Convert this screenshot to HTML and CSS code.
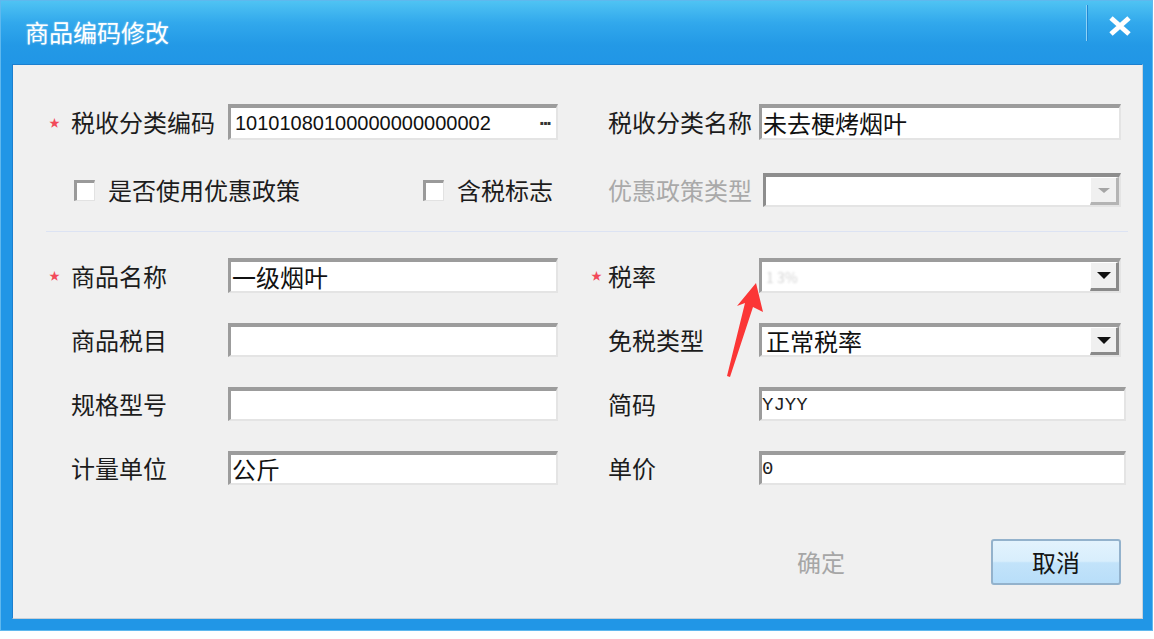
FILE: index.html
```html
<!DOCTYPE html>
<html lang="zh-CN">
<head>
    <meta charset="UTF-8">
    <meta name="viewport" content="width=device-width, initial-scale=1.0">
    <title>商品编码修改</title>
    <link rel="stylesheet" href="styles.css">
</head>
<body>
    <div class="window">
        <div class="titlebar">
            <span class="title">商品编码修改</span>
            <span class="close-sep"></span>
            <span class="close">
                <svg width="24" height="20" viewBox="0 0 24 20">
                    <path d="M3 2 L21 18 M21 2 L3 18" stroke="#fff" stroke-width="5" fill="none"/>
                </svg>
            </span>
        </div>

        <div class="panel">
            <!-- 税收分类 -->
            <div class="row row-first">
                <span class="req">★</span>
                <span class="label">税收分类编码</span>
                <div class="field">
                    <span class="code">10101080100000000000002</span>
                    <span class="dots">···</span>
                </div>
                <span></span>
                <span></span>
                <span class="label">税收分类名称</span>
                <div class="field">未去梗烤烟叶</div>
            </div>

            <div class="row row-checks">
                <span></span>
                <div class="checks">
                    <span class="check-item"><span class="checkbox"></span>是否使用优惠政策</span>
                    <span class="check-item tax-flag"><span class="checkbox"></span>含税标志</span>
                </div>
                <span></span>
                <span></span>
                <span class="label disabled">优惠政策类型</span>
                <div class="field combo combo-disabled">
                    <span class="combo-text"></span>
                    <span class="drop"><span class="tri"></span></span>
                </div>
            </div>

            <div class="separator"></div>

            <!-- 商品信息 -->
            <div class="row row-goods">
                <span class="req">★</span>
                <span class="label">商品名称</span>
                <div class="field">一级烟叶</div>
                <span></span>
                <span class="req">★</span>
                <span class="label">税率</span>
                <div class="field combo">
                    <span class="combo-text blurred">1 3%</span>
                    <span class="drop"><span class="tri"></span></span>
                </div>
            </div>

            <div class="row">
                <span></span>
                <span class="label">商品税目</span>
                <div class="field"></div>
                <span></span>
                <span></span>
                <span class="label">免税类型</span>
                <div class="field combo">
                    <span class="combo-text">正常税率</span>
                    <span class="drop"><span class="tri"></span></span>
                </div>
            </div>

            <div class="row">
                <span></span>
                <span class="label">规格型号</span>
                <div class="field"></div>
                <span></span>
                <span></span>
                <span class="label">简码</span>
                <div class="field wide mono">YJYY</div>
            </div>

            <div class="row">
                <span></span>
                <span class="label">计量单位</span>
                <div class="field">公斤</div>
                <span></span>
                <span></span>
                <span class="label">单价</span>
                <div class="field wide mono">0</div>
            </div>

            <div class="actions">
                <button class="btn btn-ok" disabled>确定</button>
                <button class="btn btn-cancel">取消</button>
            </div>
        </div>

        <!-- 标注箭头 -->
        <svg class="arrow" width="1153" height="631" viewBox="0 0 1153 631">
            <polygon points="756,283 763,312 753,307 730,377 727,376 745,303 737,306" fill="#fb3636"/>
        </svg>
    </div>
</body>
</html>
```

FILE: styles.css
```css
html, body {
    margin: 0;
    padding: 0;
    background: #fff;
}

body {
    width: 1154px;
    height: 639px;
    font-family: "Noto Sans CJK SC", "Liberation Sans", sans-serif;
}

.window {
    position: relative;
    width: 1153px;
    height: 631px;
    box-sizing: border-box;
    background: #2196e6;
    border: 1px solid #5fb8ee;
    display: flex;
    flex-direction: column;
}

.titlebar {
    height: 63px;
    display: flex;
    align-items: center;
    background: linear-gradient(#4fc3f3 0%, #31a8ec 35%, #2399e6 70%, #2196e6 100%);
    padding-left: 24px;
}

.title {
    color: #fff;
    font-size: 24px;
    line-height: 1;
    text-shadow: 0 0 2px rgba(255, 255, 255, 0.5);
    margin-top: -2px;
}

.close-sep {
    margin-left: auto;
    align-self: flex-start;
    margin-top: 4px;
    width: 1px;
    height: 36px;
    background: #8fd2f5;
    border-right: 1px solid #1e88d6;
}

.close {
    width: 64px;
    display: flex;
    justify-content: center;
    margin-top: -14px;
}

.panel {
    flex: 1;
    margin: 0 9px 11px 11px;
    background: #f0f0f0;
    border: 1px solid #1b7fcf;
    border-right-color: #c9d3dc;
    border-bottom-color: #c9cfd6;
    padding: 39px 0 0 33px;
    box-sizing: border-box;
}

.row {
    display: grid;
    grid-template-columns: 25px 157px 330px 30px 20px 151px 362px;
    align-items: center;
    height: 34px;
    margin-top: 30px;
}

.row-first {
    height: 36px;
    margin-top: 0;
}

.row-checks {
    margin-top: 33px;
}

.row-goods {
    margin-top: 26px;
    height: 35px;
}

.req {
    color: #f24a5a;
    font-size: 11px;
    line-height: 1;
    padding-left: 3px;
}

.label {
    font-size: 24px;
    line-height: 1;
    color: #1c1c1c;
    white-space: nowrap;
}

.label.disabled {
    color: #a9a9a9;
}

.field {
    height: 100%;
    box-sizing: border-box;
    background: #fff;
    border-top: 4px solid #9c9c9c;
    border-left: 3px solid #9c9c9c;
    border-right: 2px solid #e4e4e4;
    border-bottom: 2px solid #e4e4e4;
    font-size: 24px;
    line-height: 1;
    color: #111;
    display: flex;
    align-items: center;
    padding-left: 1px;
    white-space: nowrap;
    overflow: hidden;
}

.field.wide {
    margin-right: -5px;
}

.field.mono {
    font-family: "Liberation Mono", monospace;
    font-size: 19px;
    color: #222;
    padding-left: 0;
}

.code {
    font-family: "Liberation Sans", sans-serif;
    font-size: 20px;
    color: #111;
    padding-left: 3px;
}

.dots {
    margin-left: auto;
    margin-right: 6px;
    font-family: "Liberation Sans", sans-serif;
    font-size: 20px;
    font-weight: bold;
    color: #333;
    letter-spacing: -3px;
}

.checks {
    grid-column: 2 / span 2;
    display: flex;
    align-items: center;
    padding-left: 3px;
    padding-right: 5px;
}

.check-item {
    display: flex;
    align-items: center;
    font-size: 24px;
    line-height: 1;
    color: #1c1c1c;
}

.tax-flag {
    margin-left: auto;
}

.checkbox {
    width: 21px;
    height: 21px;
    box-sizing: border-box;
    background: #fff;
    border-top: 3px solid #9a9a9a;
    border-left: 3px solid #9a9a9a;
    border-right: 1px solid #e2e2e2;
    border-bottom: 1px solid #e2e2e2;
    margin-right: 13px;
}

.combo {
    padding-left: 4px;
    padding-right: 0;
}

.combo-disabled {
    margin-left: 4px;
    border-top-color: #8d8d8d;
    border-left-color: #8d8d8d;
}

.combo-text {
    flex: 1;
}

.combo-text.blurred {
    color: #d4d4d4;
    font-size: 14px;
    filter: blur(1px);
}

.drop {
    width: 29px;
    height: 100%;
    box-sizing: border-box;
    background: #f0f0f0;
    border-top: 1px solid #fff;
    border-left: 1px solid #fff;
    border-right: 3px solid #8a8a8a;
    border-bottom: 3px solid #8a8a8a;
    display: flex;
    align-items: center;
    justify-content: center;
}

.tri {
    width: 0;
    height: 0;
    border-left: 7px solid transparent;
    border-right: 7px solid transparent;
    border-top: 7px solid #111;
}

.combo-disabled .drop {
    border-right-color: #b4b4b4;
    border-bottom-color: #b4b4b4;
}

.combo-disabled .tri {
    border-top-color: #a5a5a5;
    border-left-width: 6px;
    border-right-width: 6px;
    border-top-width: 5px;
}

.separator {
    height: 1px;
    background: #dce3f3;
    width: 1082px;
    margin-top: 24px;
}

.actions {
    display: flex;
    justify-content: flex-end;
    gap: 105px;
    margin-top: 54px;
    padding-right: 21px;
}

.btn {
    width: 130px;
    height: 46px;
    box-sizing: border-box;
    font-family: "Noto Sans CJK SC", sans-serif;
    font-size: 24px;
    line-height: 1;
    border-radius: 3px;
    padding: 0;
}

.btn-ok {
    background: transparent;
    border: none;
    color: #a6a6a6;
}

.btn-cancel {
    background: linear-gradient(#e3f3fd 0%, #d8eefc 48%, #c2e3fa 52%, #b8def9 100%);
    border: 2px solid #93b2cc;
    color: #151515;
    cursor: pointer;
}

.arrow {
    position: absolute;
    left: -1px;
    top: -1px;
    pointer-events: none;
}
```
